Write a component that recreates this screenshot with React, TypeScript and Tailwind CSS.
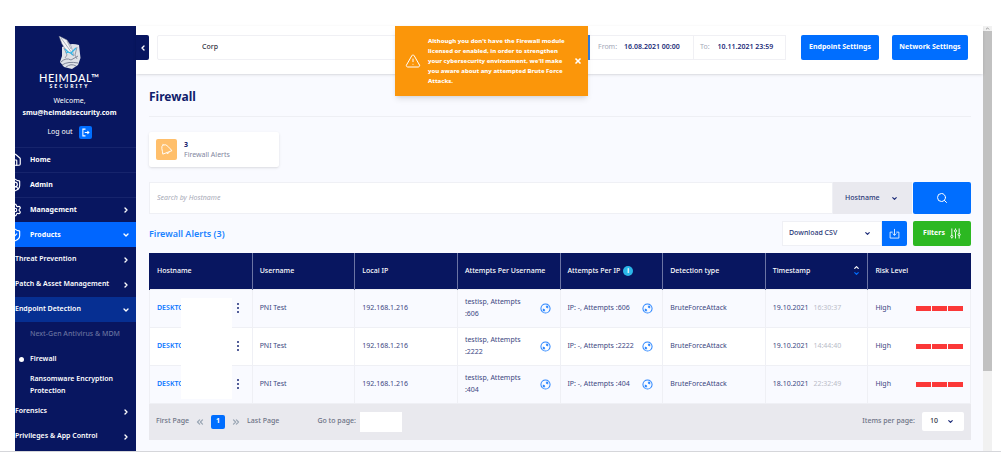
import { useState } from "react";
import {
  AlertTriangle,
  ChevronDown,
  ChevronLeft,
  ChevronRight,
  ChevronUp,
  ChevronsLeft,
  ChevronsRight,
  Home,
  Search,
  Settings,
  ShieldCheck,
  ShieldUser,
  X,
} from "lucide-react";
import { clsx } from "clsx";

const mainNav = [
  { name: "Home", icon: Home },
  { name: "Admin", icon: ShieldUser },
  { name: "Management", icon: Settings, arrow: true },
  { name: "Products", icon: ShieldCheck, active: true },
];

const columns = [
  "Hostname",
  "Username",
  "Local IP",
  "Attempts Per Username",
  "Attempts Per IP",
  "Detection type",
  "Timestamp",
  "Risk Level",
];

const alerts = [
  { attempts: 606, date: "19.10.2021", time: "16:30:37" },
  { attempts: 2222, date: "19.10.2021", time: "14:44:40" },
  { attempts: 404, date: "18.10.2021", time: "22:32:49" },
];

function Logo() {
  return (
    <svg viewBox="0 0 24 34" className="w-6 h-[34px]" aria-hidden="true">
      {/* Head and beard */}
      <path d="M4 11 Q12 6 21 9 L22.5 22 L20 29 L14 33 L6 31 L2 26 L4 20 Z" fill="#dfe2e8" />
      <path d="M3 26 Q8 21 13 24 L20 20 M4 29 Q10 25 20 27 M8 31 Q13 27 18 30" stroke="#7f8698" strokeWidth="1" fill="none" />
      <path d="M6 12 L9 19 L7 22 M19 11 L17 19 L19 23" stroke="#8b91a1" strokeWidth="0.9" fill="none" />
      {/* Helmet wing */}
      <path d="M1 0 L9 4 L13 10 L16 20 L8 14 L4 8 Z" fill="#f3f4f7" stroke="#6f768b" strokeWidth="0.5" />
      <path d="M3 2 L14 17 M9 5 L13 13" stroke="#8b91a1" strokeWidth="0.7" fill="none" />
      {/* Eyes */}
      <path d="M7 13 L10 16 L8 17 M10 16 L13 17 L16 14 L18 12 M13 17 L15 19" stroke="#35b6e6" strokeWidth="1.3" fill="none" />
    </svg>
  );
}

function LogOutIcon() {
  return (
    <svg viewBox="0 0 12 12" className="size-[9px]" fill="none" stroke="#fff" strokeWidth="1.4">
      <path d="M6 1.5 H2.5 V10.5 H6 M5 6 H10.5 M8.5 4 L10.5 6 L8.5 8" />
    </svg>
  );
}

function BellIcon() {
  return (
    <svg viewBox="0 0 14 14" className="size-[13px]" fill="none" stroke="#fff" strokeWidth="1" strokeLinejoin="round">
      <path d="M3.2 2.2 Q6.5 0.8 9 4 L10.8 6.2 L13 8.2 L3 12 L2.6 9 L2 6 Q1.6 3.4 3.2 2.2 Z" />
      <path d="M3 1 L3.4 2 M7 10.6 Q8.4 13 10 9.6" />
    </svg>
  );
}

function ExpandIcon() {
  return (
    <svg viewBox="0 0 12 12" className="size-[11px]" fill="none" stroke="#2b86ff" strokeWidth="1.1">
      <circle cx="6" cy="6" r="5" />
      <path d="M6.4 3.6 H8.4 V5.6 M8.4 3.6 L6.8 5.2 M5.6 8.4 H3.6 V6.4 M3.6 8.4 L5.2 6.8" />
    </svg>
  );
}

function DotsIcon() {
  return (
    <svg viewBox="0 0 4 12" className="w-1 h-3" fill="#1c2b78">
      <circle cx="2" cy="2" r="1" />
      <circle cx="2" cy="6" r="1" />
      <circle cx="2" cy="10" r="1" />
    </svg>
  );
}

function DownloadIcon() {
  return (
    <svg viewBox="0 0 12 12" className="size-[11px]" fill="none" stroke="#fff" strokeWidth="0.9">
      <path d="M4 4.5 H1.2 V11 H10.8 V4.5 H8 M6 1 V8 M4 6 L6 8 L8 6" />
    </svg>
  );
}

function SlidersIcon() {
  return (
    <svg viewBox="0 0 12 12" className="size-[11px]" fill="none" stroke="#fff" strokeWidth="1">
      <path d="M2 0.5 V8 M2 10.5 V11.5 M6 0.5 V2 M6 4.5 V11.5 M10 0.5 V6 M10 8.5 V11.5" />
      <circle cx="2" cy="9.2" r="1.2" />
      <circle cx="6" cy="3.2" r="1.2" />
      <circle cx="10" cy="7.2" r="1.2" />
    </svg>
  );
}

function Sidebar() {
  return (
    <aside className="w-[121px] shrink-0 overflow-hidden bg-[#081660] text-white flex flex-col">
      <div className="h-[121px] flex flex-col items-center pt-[10px] pr-3">
        <Logo />
        <div className="text-[11px] leading-3 mt-[2px] tracking-wider font-medium font-[Lato,sans-serif]">HEIMDAL™</div>
        <div className="text-[5px] leading-[5px] tracking-[2px] font-bold">SECURITY</div>
        <div className="leading-3 mt-[6px]">Welcome,</div>
        <div className="leading-3 font-bold">smu@heimdalsecurity.com</div>
        <button className="flex items-center gap-1.5 mt-[7px]">
          Log out
          <span className="size-[13px] rounded-xs bg-[#006eff] flex items-center justify-center">
            <LogOutIcon />
          </span>
        </button>
      </div>

      <nav className="pb-[2px]">
        {mainNav.map((item) => {
          const Icon = item.icon;
          return (
            <a
              key={item.name}
              href="#"
              className={clsx(
                "h-[25px] flex items-center pr-1.5 font-bold border-t",
                item.active ? "bg-[#0066ff] border-[#0066ff]" : "border-[#16246c]"
              )}
            >
              <Icon className="size-[14px] -ml-[7px] mr-2 shrink-0" strokeWidth={2} />
              <span className="flex-1">{item.name}</span>
              {item.arrow && <ChevronRight className="size-2" strokeWidth={4} />}
              {item.active && <ChevronDown className="size-2" strokeWidth={4} />}
            </a>
          );
        })}
        <SubItem name="Threat Prevention" />
        <SubItem name="Patch & Asset Management" />
        <SubItem name="Endpoint Detection" open />
        <a href="#" className="h-[25px] flex items-center pl-[15px] text-[#66709f] whitespace-nowrap font-medium">
          Next-Gen Antivirus & MDM
        </a>
        <a href="#" className="h-[25px] flex items-center pl-1 font-semibold">
          <span className="size-[5px] rounded-full bg-white mr-[6px]" />
          Firewall
        </a>
        <a href="#" className="h-[27px] block pl-[15px] pr-4 pt-px leading-3 font-semibold">
          Ransomware Encryption Protection
        </a>
        <SubItem name="Forensics" />
        <SubItem name="Privileges & App Control" />
      </nav>
    </aside>
  );
}

function SubItem({ name, open }: { name: string; open?: boolean }) {
  const Arrow = open ? ChevronDown : ChevronRight;
  return (
    <a
      href="#"
      className={clsx("h-[25px] flex items-center justify-between pr-1.5 font-semibold", open && "bg-[#062f92]")}
    >
      {name}
      <Arrow className="size-2" strokeWidth={4} />
    </a>
  );
}

function TopBar() {
  return (
    <header className="relative h-12 bg-white shadow-sm flex items-start pr-[15px]">
      <button aria-label="Collapse menu" className="w-[13px] h-[25px] mt-[9px] rounded-r-xs bg-[#081660] text-white flex items-center justify-center">
        <ChevronLeft className="size-2" strokeWidth={4} />
      </button>
      <div className="flex flex-1 h-[25px] mt-[9px] ml-2">
        <input
          aria-label="Customer"
          defaultValue="Corp"
          className="flex-1 min-w-0 border border-[#f0f0f4] rounded-xs pl-11 text-[#33333f] font-medium"
        />
        <button aria-label="Select customer" className="w-6 bg-[#2f7de0]" />
        <label className="flex items-center w-[104px] border-y border-r border-[#f0f0f4] pl-2 text-[#a4a8b8]">
          From:
          <input defaultValue="16.08.2021 00:00" className="w-[62px] ml-[7px] text-[#1c2b78] font-semibold" />
        </label>
        <label className="flex items-center w-[92px] border-y border-r border-[#f0f0f4] pl-[6px] text-[#a4a8b8]">
          To:
          <input defaultValue="10.11.2021 23:59" className="w-[62px] ml-2 text-[#1c2b78] font-semibold" />
        </label>
      </div>
      <button className="w-[78px] h-[25px] mt-[9px] ml-[15px] rounded-xs bg-[#006eff] text-white font-bold">Endpoint Settings</button>
      <button className="w-[76px] h-[25px] mt-[9px] ml-[13px] rounded-xs bg-[#006eff] text-white font-bold">Network Settings</button>
    </header>
  );
}

function Toast({ onClose }: { onClose: () => void }) {
  return (
    <div role="alert" className="absolute z-10 top-[26px] left-[395px] w-[193px] h-[70px] bg-[#fb960a] text-white shadow-md flex items-center pl-[10px] pr-1.5">
      <AlertTriangle className="size-4 shrink-0" strokeWidth={1.5} />
      <p className="flex-1 ml-[7px] text-[6px] leading-[10px] font-extrabold whitespace-nowrap">
        Although you don't have the Firewall module<br />
        licensed or enabled, in order to strengthen<br />
        your cybersecurity environment, we'll make<br />
        you aware about any attempted Brute Force<br />
        Attacks.
      </p>
      <button aria-label="Close" onClick={onClose}>
        <X className="size-2" strokeWidth={5} />
      </button>
    </div>
  );
}

function AlertsTable() {
  return (
    <table className="w-full table-fixed border-collapse text-left">
      <thead>
        <tr className="h-9 bg-[#081660] text-white">
          {columns.map((name) => (
            <th key={name} className="px-[7px] font-medium border-l border-[#6b74a4] first:border-[#081660] whitespace-nowrap">
              <span className="flex items-center">
                {name}
                {name === "Attempts Per IP" && (
                  <span className="size-[10px] ml-[3px] rounded-full bg-[#2bb5e8] flex items-center justify-center font-bold">i</span>
                )}
                {name === "Timestamp" && (
                  <span className="ml-auto flex flex-col">
                    <ChevronUp className="size-[7px] -mb-px" strokeWidth={4} />
                    <ChevronDown className="size-[7px] text-[#006eff]" strokeWidth={4} />
                  </span>
                )}
              </span>
            </th>
          ))}
        </tr>
      </thead>
      <tbody>
        {alerts.map((row, i) => (
          <tr key={row.attempts} className="h-[38px] odd:bg-[#f9faff] even:bg-white *:border *:border-[#eff0f5] *:px-[7px]">
            <td className="relative">
              <div className="flex items-center justify-between">
                <a href="#" className="text-[#0a75ff] font-semibold">DESKTO</a>
                <button aria-label="Row actions" className="mr-[5px]">
                  <DotsIcon />
                </button>
              </div>
              <span
                className={clsx(
                  "absolute left-[31px] w-[51px] bg-white",
                  i === 0 ? "top-2 -bottom-px" : i === 1 ? "-inset-y-px" : "-top-px bottom-1"
                )}
              />
            </td>
            <td>PNI Test</td>
            <td>192.168.1.216</td>
            <td>
              <div className="flex items-center justify-between">
                <span className="leading-3">
                  testisp, Attempts
                  <br />
                  {`:${row.attempts}`}
                </span>
                <button aria-label="Expand" className="mr-0.5"><ExpandIcon /></button>
              </div>
            </td>
            <td>
              <div className="flex items-center justify-between whitespace-nowrap">
                {`IP: -, Attempts :${row.attempts}`}
                <button aria-label="Expand" className="mr-0.5"><ExpandIcon /></button>
              </div>
            </td>
            <td>BruteForceAttack</td>
            <td className="whitespace-nowrap">
              {row.date} <span className="ml-[3px] text-[#b9bcc8]">{row.time}</span>
            </td>
            <td>
              <div className="flex items-center justify-between">
                High
                <span className="flex gap-px">
                  <span className="w-[15px] h-[5px] bg-[#fb3838]" />
                  <span className="w-[15px] h-[5px] bg-[#fb3838]" />
                  <span className="w-[15px] h-[5px] bg-[#fb3838]" />
                </span>
              </div>
            </td>
          </tr>
        ))}
      </tbody>
    </table>
  );
}

function Pagination() {
  return (
    <div className="h-9 bg-[#e9e9ee] text-[#6c7285] font-medium flex items-center pl-[7px] pr-[7px]">
      <button>First Page</button>
      <button aria-label="Previous page" className="ml-1.5"><ChevronsLeft className="size-[10px] text-[#9aa6b4]" strokeWidth={3} /></button>
      <button className="size-[14px] mx-1.5 rounded-xs bg-[#006eff] text-white font-bold">1</button>
      <button aria-label="Next page"><ChevronsRight className="size-[10px] text-[#9aa6b4]" strokeWidth={3} /></button>
      <button className="ml-1.5">Last Page</button>
      <label className="ml-[38px] flex items-center gap-1">
        Go to page:
        <input className="w-[42px] h-5 bg-white" />
      </label>
      <label className="ml-auto flex items-center gap-[7px]">
        Items per page:
        <span className="relative flex items-center">
          <select className="w-[42px] h-[19px] pl-2 rounded-xs bg-white text-[#33333f] appearance-none">
            <option>10</option>
          </select>
          <ChevronDown className="absolute right-[10px] size-[7px] text-[#1c2b78]" strokeWidth={4} />
        </span>
      </label>
    </div>
  );
}

export default function App() {
  const [toast, setToast] = useState(true);

  return (
    <div className="relative pt-[26px] bg-white text-[7px] font-['Noto_Sans','Open_Sans',sans-serif]">
      <div className="flex pl-[15px] pr-[9px] border-b border-[#d5d6da]">
        <Sidebar />

        <div className="flex-1 min-w-0 bg-[#f9faff]">
          <TopBar />
          <main className="pl-[13px] pr-3 text-[#3c477f]">
            <h1 className="h-[43px] pt-[14px] text-[12px] leading-[18px] font-bold text-[#10206b] border-b border-[#eeeff4]">Firewall</h1>

            <div className="w-[130px] h-[35px] mt-[15px] pl-[7px] rounded-xs bg-white shadow flex items-center">
              <span className="size-[21px] rounded-xs bg-[#ffbf6b] flex items-center justify-center">
                <BellIcon />
              </span>
              <div className="ml-[7px] leading-[10px]">
                <div className="font-bold text-[#10206b]">3</div>
                <div className="text-[#8286a0]">Firewall Alerts</div>
              </div>
            </div>

            <div className="flex h-8 mt-[15px]">
              <input
                aria-label="Search"
                placeholder="Search by Hostname"
                className="flex-1 min-w-0 px-[7px] bg-white border border-[#eff0f5] placeholder:italic placeholder:text-[#a9abb8]"
              />
              <span className="relative flex items-center">
                <select aria-label="Search field" className="w-[79px] h-full pl-3 bg-[#e9e9ef] text-[#2a3777] font-medium appearance-none">
                  <option>Hostname</option>
                </select>
                <ChevronDown className="absolute right-[14px] size-[7px] text-[#1c2b78]" strokeWidth={4} />
              </span>
              <button aria-label="Search" className="w-[58px] ml-px rounded-xs bg-[#006eff] text-white flex items-center justify-center">
                <Search className="size-3" strokeWidth={2} />
              </button>
            </div>

            <div className="flex items-center h-[25px] mt-[7px] mb-[7px]">
              <h2 className="flex-1 text-[9px] font-semibold text-[#1a82ff]">Firewall Alerts (3)</h2>
              <span className="relative flex items-center">
                <select aria-label="Export" className="w-[100px] h-[25px] pl-1.5 bg-white border border-[#eff0f5] text-[#2a3777] font-medium appearance-none">
                  <option>Download CSV</option>
                </select>
                <ChevronDown className="absolute right-[11px] size-[7px] text-[#1c2b78]" strokeWidth={4} />
              </span>
              <button aria-label="Download" className="w-[25px] h-[25px] rounded-r-xs bg-[#006eff] flex items-center justify-center">
                <DownloadIcon />
              </button>
              <button className="w-[58px] h-[25px] ml-[6px] rounded-xs bg-[#2cb822] text-white font-bold flex items-center justify-center gap-[5px]">
                Filters
                <SlidersIcon />
              </button>
            </div>

            <AlertsTable />
            <Pagination />
          </main>
        </div>

        {/* Scrollbar */}
        <div className="w-[9px] bg-[#f1f1f1]">
          <div className="h-[5px] flex items-center justify-center">
            <ChevronUp className="size-[5px] text-[#888]" strokeWidth={4} />
          </div>
          <div className="h-[340px] bg-[#c1c1c1]" />
        </div>
      </div>

      {toast && <Toast onClose={() => setToast(false)} />}
    </div>
  );
}
